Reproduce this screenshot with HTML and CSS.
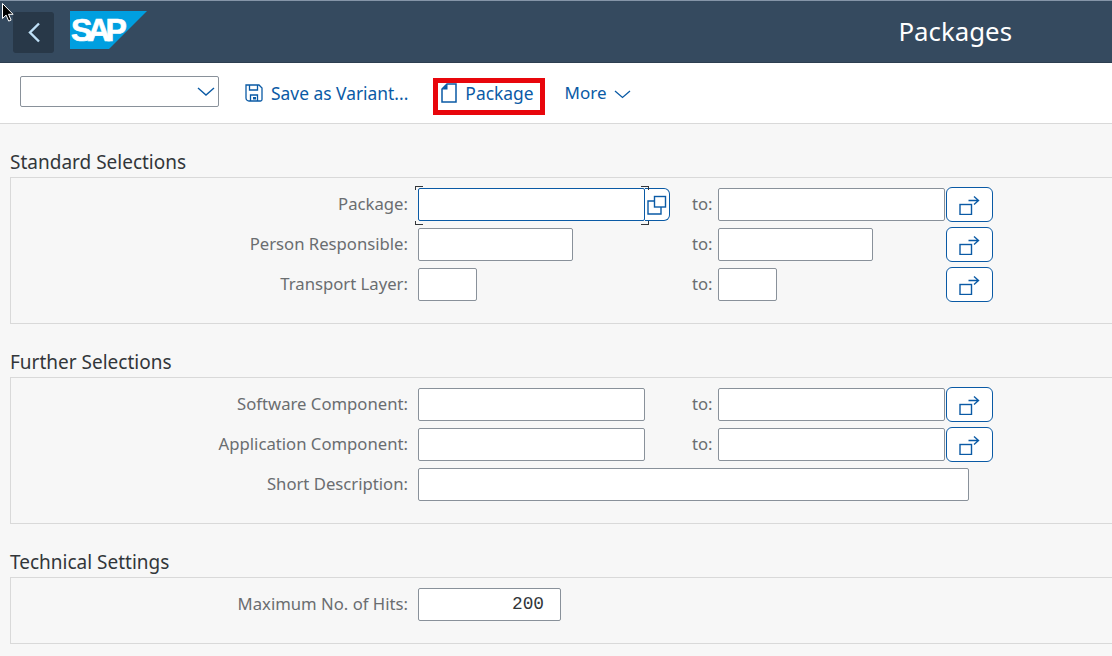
FILE: index.html
```html
<!DOCTYPE html>
<html lang="en">
<head>
    <meta charset="UTF-8">
    <meta name="viewport" content="width=device-width, initial-scale=1.0">
    <title>Packages</title>
    <link rel="stylesheet" href="styles.css">
</head>
<body>
    <svg class="cursor" width="13" height="23" viewBox="0 0 13 23">
        <path d="M1.500 1.500v15l3.600-3.400 2.600 6 2.400-1-2.600-5.800h4.600z" fill="#000" stroke="#fff" stroke-width="1"/>
    </svg>

    <header class="shell">
        <button class="back" type="button">
            <svg width="14" height="21" viewBox="0 0 14 21"><path d="M12 1.500L3 10.500l9 9" fill="none" stroke="#bfe0f7" stroke-width="2.400"/></svg>
        </button>
        <svg class="logo" width="77" height="38" viewBox="0 0 77 38">
            <polygon points="0,0 77,0 39,38 0,38" fill="#009fe0"/>
            <text x="1" y="30" class="logo-text">SAP</text>
        </svg>
        <h1 class="title">Packages</h1>
    </header>

    <div class="toolbar">
        <div class="select">
            <svg width="18" height="10" viewBox="0 0 18 10"><path d="M1 1l8 7 8-7" fill="none" stroke="#0a5aa5" stroke-width="1.400"/></svg>
        </div>
        <a class="tool tool-save">
            <svg width="18" height="18" viewBox="0 0 18 18" fill="none" stroke="#0a5aa5" stroke-width="1.300">
                <path d="M1 1h13l3 3v11.500a1.500 1.500 0 0 1-1.500 1.500H4a3 3 0 0 1-3-3z"/>
                <path d="M4.500 1v5h8V1M5.500 17v-6h7v6"/>
                <path d="M8 13h3v2.500H8z" fill="#0a5aa5" stroke="none"/>
            </svg>
            Save as Variant...
        </a>
        <a class="tool tool-package">
            <svg width="16" height="20" viewBox="0 0 16 20" fill="none" stroke="#0a5aa5" stroke-width="1.500">
                <path d="M6 1h9v18H1V6z"/>
                <path d="M1 6.500h5.500V1z" fill="#0a5aa5" stroke="none"/>
            </svg>
            Package
        </a>
        <a class="tool tool-more">
            More
            <svg width="17" height="9" viewBox="0 0 17 9"><path d="M1 1l7.500 6.500L16 1" fill="none" stroke="#0a5aa5" stroke-width="1.300"/></svg>
        </a>
    </div>

    <main class="content">
        <section class="group group-first">
            <h2 class="group-title">Standard Selections</h2>
            <div class="group-box">
                <div class="row">
                    <label class="label">Package:</label>
                    <div class="cell">
                        <span class="focus-wrap">
                            <span class="input input-focus w-long"></span>
                            <span class="help-btn">
                                <svg width="22" height="24" viewBox="0 0 22 24" fill="none" stroke="#0a5aa5" stroke-width="1.400"><path d="M8 8H2v13h13v-7"/><rect x="8.500" y="3.500" width="11" height="10.500"/></svg>
                            </span>
                        </span>
                    </div>
                    <span class="to">to:</span>
                    <div class="cell-to"><span class="input w-long"></span></div>
                    <button class="multi" type="button"><svg width="22" height="20" viewBox="0 0 22 20" fill="none" stroke="#0a5aa5" stroke-width="1.400"><rect x="1" y="9.500" width="11.500" height="10"/><path d="M9.500 5.500h10M15 1.500l4.500 4-4.500 4"/></svg></button>
                </div>
                <div class="row">
                    <label class="label">Person Responsible:</label>
                    <div class="cell"><span class="input w-mid"></span></div>
                    <span class="to">to:</span>
                    <div class="cell-to"><span class="input w-mid"></span></div>
                    <button class="multi" type="button"><svg width="22" height="20" viewBox="0 0 22 20" fill="none" stroke="#0a5aa5" stroke-width="1.400"><rect x="1" y="9.500" width="11.500" height="10"/><path d="M9.500 5.500h10M15 1.500l4.500 4-4.500 4"/></svg></button>
                </div>
                <div class="row">
                    <label class="label">Transport Layer:</label>
                    <div class="cell"><span class="input w-short"></span></div>
                    <span class="to">to:</span>
                    <div class="cell-to"><span class="input w-short"></span></div>
                    <button class="multi" type="button"><svg width="22" height="20" viewBox="0 0 22 20" fill="none" stroke="#0a5aa5" stroke-width="1.400"><rect x="1" y="9.500" width="11.500" height="10"/><path d="M9.500 5.500h10M15 1.500l4.500 4-4.500 4"/></svg></button>
                </div>
            </div>
        </section>

        <section class="group">
            <h2 class="group-title">Further Selections</h2>
            <div class="group-box">
                <div class="row">
                    <label class="label">Software Component:</label>
                    <div class="cell"><span class="input w-long"></span></div>
                    <span class="to">to:</span>
                    <div class="cell-to"><span class="input w-long"></span></div>
                    <button class="multi" type="button"><svg width="22" height="20" viewBox="0 0 22 20" fill="none" stroke="#0a5aa5" stroke-width="1.400"><rect x="1" y="9.500" width="11.500" height="10"/><path d="M9.500 5.500h10M15 1.500l4.500 4-4.500 4"/></svg></button>
                </div>
                <div class="row">
                    <label class="label">Application Component:</label>
                    <div class="cell"><span class="input w-long"></span></div>
                    <span class="to">to:</span>
                    <div class="cell-to"><span class="input w-long"></span></div>
                    <button class="multi" type="button"><svg width="22" height="20" viewBox="0 0 22 20" fill="none" stroke="#0a5aa5" stroke-width="1.400"><rect x="1" y="9.500" width="11.500" height="10"/><path d="M9.500 5.500h10M15 1.500l4.500 4-4.500 4"/></svg></button>
                </div>
                <div class="row">
                    <label class="label">Short Description:</label>
                    <div class="cell"><span class="input w-full"></span></div>
                </div>
            </div>
        </section>

        <section class="group">
            <h2 class="group-title">Technical Settings</h2>
            <div class="group-box group-box-small">
                <div class="row">
                    <label class="label">Maximum No. of Hits:</label>
                    <div class="cell"><span class="input w-hits">200</span></div>
                </div>
            </div>
        </section>
    </main>
</body>
</html>
```

FILE: styles.css
```css
* {
    box-sizing: border-box;
}
html, body {
    height: 100%;
}
body {
    margin: 0;
    font-family: "Noto Sans", sans-serif;
    font-size: 16px;
    background-color: #f7f7f7;
    overflow: hidden;
}
.cursor {
    position: absolute;
    top: 2px;
    left: 1px;
    z-index: 5;
}

/* top bar */
.shell {
    display: flex;
    align-items: center;
    height: 63px;
    padding: 0 100px 0 13px;
    background-color: #354a5f;
    border-top: 1px solid #8595a8;
    border-bottom: 1px solid #2c3e50;
}
.back {
    display: flex;
    align-items: center;
    justify-content: center;
    width: 41px;
    height: 41px;
    margin-top: 1px;
    padding: 0;
    border: none;
    border-radius: 3px;
    background-color: #283848;
}
.logo {
    margin: -3px 0 0 16px;
}
.logo-text {
    font-family: "Liberation Sans", sans-serif;
    font-size: 32px;
    font-weight: bold;
    letter-spacing: -5px;
    fill: #fff;
    stroke: #fff;
    stroke-width: 0.700px;
}
.title {
    margin: -1px 0 0 auto;
    font-size: 25.800px;
    font-weight: 400;
    color: #fff;
}

/* toolbar */
.toolbar {
    display: flex;
    align-items: center;
    height: 61px;
    padding-left: 20px;
    background-color: #fff;
    border-bottom: 1px solid #d9d9d9;
}
.select {
    display: flex;
    align-items: center;
    justify-content: flex-end;
    width: 199px;
    height: 31px;
    padding-right: 3px;
    margin-top: -3px;
    background-color: #fff;
    border: 1px solid #89919a;
    border-radius: 2px;
}
.tool {
    display: flex;
    align-items: center;
    color: #0a5aa5;
    font-size: 17.400px;
    margin-top: -1px;
}
.tool-save {
    gap: 8px;
    margin-left: 26px;
}
.tool-package {
    gap: 8px;
    height: 37px;
    margin-top: 7px;
    margin-left: 25px;
    padding: 0 6px 7px 3px;
    border: 5px solid #e8060c;
}
.tool-more {
    gap: 7px;
    margin-left: 20px;
    font-size: 17px;
}
.tool-more svg {
    margin-top: 4px;
}

/* selection groups */
.content {
    padding-left: 10px;
}
.group {
    margin-top: 25px;
}
.group-title {
    margin: 0;
    height: 28px;
    line-height: 26px;
    font-size: 19px;
    font-weight: 400;
    color: #32363a;
}
.group-box {
    height: 147px;
    margin-right: -2px;
    padding-top: 10px;
    border: 1px solid #d9d9d9;
}
.group-box-small {
    height: 67px;
}
.row {
    display: flex;
    height: 40px;
    align-items: flex-start;
}
.label {
    width: 397px;
    height: 33px;
    line-height: 31px;
    text-align: right;
    color: #6a6d70;
    font-size: 16.700px;
}
.cell {
    width: 274px;
    margin-left: 10px;
}
.to {
    width: 26px;
    height: 33px;
    line-height: 31px;
    color: #6a6d70;
    font-size: 16.700px;
}
.cell-to {
    width: 228px;
}
.input {
    display: block;
    height: 33px;
    padding-right: 16px;
    background-color: #fff;
    border: 1px solid #89919a;
    border-radius: 2px;
}
.w-long {
    width: 227px;
}
.w-mid {
    width: 155px;
}
.w-short {
    width: 59px;
}
.w-full {
    width: 551px;
}
.w-hits {
    width: 143px;
    text-align: right;
    line-height: 30px;
    font-family: "Liberation Mono", monospace;
    font-size: 17.800px;
    color: #32363a;
}
.focus-wrap {
    display: flex;
    position: relative;
}
.input-focus {
    border-color: #0a5aa5;
}
/* corner brackets round the focused field */
.input-focus::before,
.input-focus::after {
    content: "";
    position: absolute;
    top: -2px;
    width: 7px;
    height: 37px;
    border: 1px solid #32363a;
    clip-path: polygon(0 0, 100% 0, 100% 4px, 0 4px, 0 calc(100% - 4px), 100% calc(100% - 4px), 100% 100%, 0 100%);
}
.input-focus::before {
    left: -3px;
    border-right: none;
}
.input-focus::after {
    left: 223px;
    border-left: none;
}
.help-btn {
    display: flex;
    align-items: center;
    justify-content: center;
    width: 25px;
    height: 33px;
    background-color: #fff;
    border: 1px solid #0a5aa5;
    border-left: none;
    border-radius: 0 6px 6px 0;
}
.multi {
    display: flex;
    align-items: center;
    justify-content: center;
    width: 47px;
    height: 35px;
    margin-top: -1px;
    padding: 0;
    background-color: #fff;
    border: 1px solid #0a5aa5;
    border-radius: 6px;
}
```
